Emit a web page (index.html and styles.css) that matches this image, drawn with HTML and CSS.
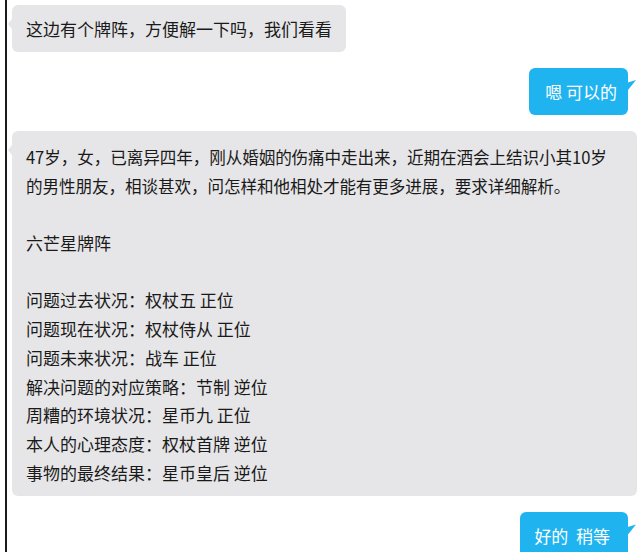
FILE: index.html
```html
<!DOCTYPE html>
<html lang="zh-CN">

<head>
    <meta charset="UTF-8">
    <meta name="viewport" content="width=device-width, initial-scale=1.0">
    <title>聊天记录</title>
    <link rel="stylesheet" href="styles.css">
</head>

<body>
    <div class="chat">
        <div class="row left">
            <div class="bubble gray">这边有个牌阵，方便解一下吗，我们看看</div>
        </div>

        <div class="row right">
            <div class="bubble blue">嗯 可以的</div>
        </div>

        <div class="row left">
            <div class="bubble gray big">
                <p class="tight">47岁，女，已离异四年，刚从婚姻的伤痛中走出来，近期在酒会上结识小其10岁</p>
                <p class="tight">的男性朋友，相谈甚欢，问怎样和他相处才能有更多进展，要求详细解析。</p>
                <p class="empty"></p>
                <p>六芒星牌阵</p>
                <p class="empty"></p>
                <p>问题过去状况：权杖五 正位</p>
                <p>问题现在状况：权杖侍从 正位</p>
                <p>问题未来状况：战车 正位</p>
                <p>解决问题的对应策略：节制 逆位</p>
                <p>周糟的环境状况：星币九 正位</p>
                <p>本人的心理态度：权杖首牌 逆位</p>
                <p>事物的最终结果：星币皇后 逆位</p>
            </div>
        </div>

        <div class="row right">
            <div class="bubble blue wide">好的&nbsp;&nbsp;稍等</div>
        </div>
    </div>
</body>

</html>
```

FILE: styles.css
```css
body {
    margin: 0;
    padding: 0;
    background-color: #fff;
    font-family: "Noto Sans CJK SC", "Noto Sans", sans-serif;
    color: #1a1a1a;
    overflow: hidden;
}

.chat {
    margin-left: 5px;
    border-left: 2px solid #1a1a1a;
    min-height: 552px;
    padding: 5px 0 0 5px;
    display: flex;
    flex-direction: column;
    box-sizing: border-box;
}

.row {
    display: flex;
}

.row.left {
    justify-content: flex-start;
}

.row.right {
    justify-content: flex-end;
    padding-right: 10px;
}

.row + .row {
    margin-top: 16px;
}

.bubble {
    position: relative;
    font-size: 17px;
    line-height: 29px;
    padding: 9px 14px;
    border-radius: 6px;
    white-space: nowrap;
}

.bubble.gray {
    background-color: #e6e6e8;
}

/* little tail on the left */
.bubble.gray::before {
    content: "";
    position: absolute;
    left: -4px;
    top: 14px;
    border-top: 5px solid transparent;
    border-bottom: 5px solid transparent;
    border-right: 4px solid #e6e6e8;
}

.bubble.blue {
    background-color: #1fb4f0;
    color: #fff;
    padding: 9px 11px 9px 16px;
}

.bubble.blue.wide {
    padding: 9px 18px 9px 14px;
}

/* tail on the right */
.bubble.blue::after {
    content: "";
    position: absolute;
    right: -8px;
    top: 12px;
    width: 10px;
    height: 10px;
    background-color: #1fb4f0;
    clip-path: polygon(0 30%, 100% 0, 20% 100%);
}

.bubble.big {
    flex: 1;
    margin-right: 1px;
    line-height: 28.7px;
    padding: 12px 14px 9px 14px;
}

.bubble.big::before {
    top: 14px;
}

.bubble.big p {
    margin: 0;
}

.bubble.big p.tight {
    font-size: 16.6px;
    letter-spacing: -0.1px;
}

.bubble.big p.empty {
    height: 28.7px;
}
```
